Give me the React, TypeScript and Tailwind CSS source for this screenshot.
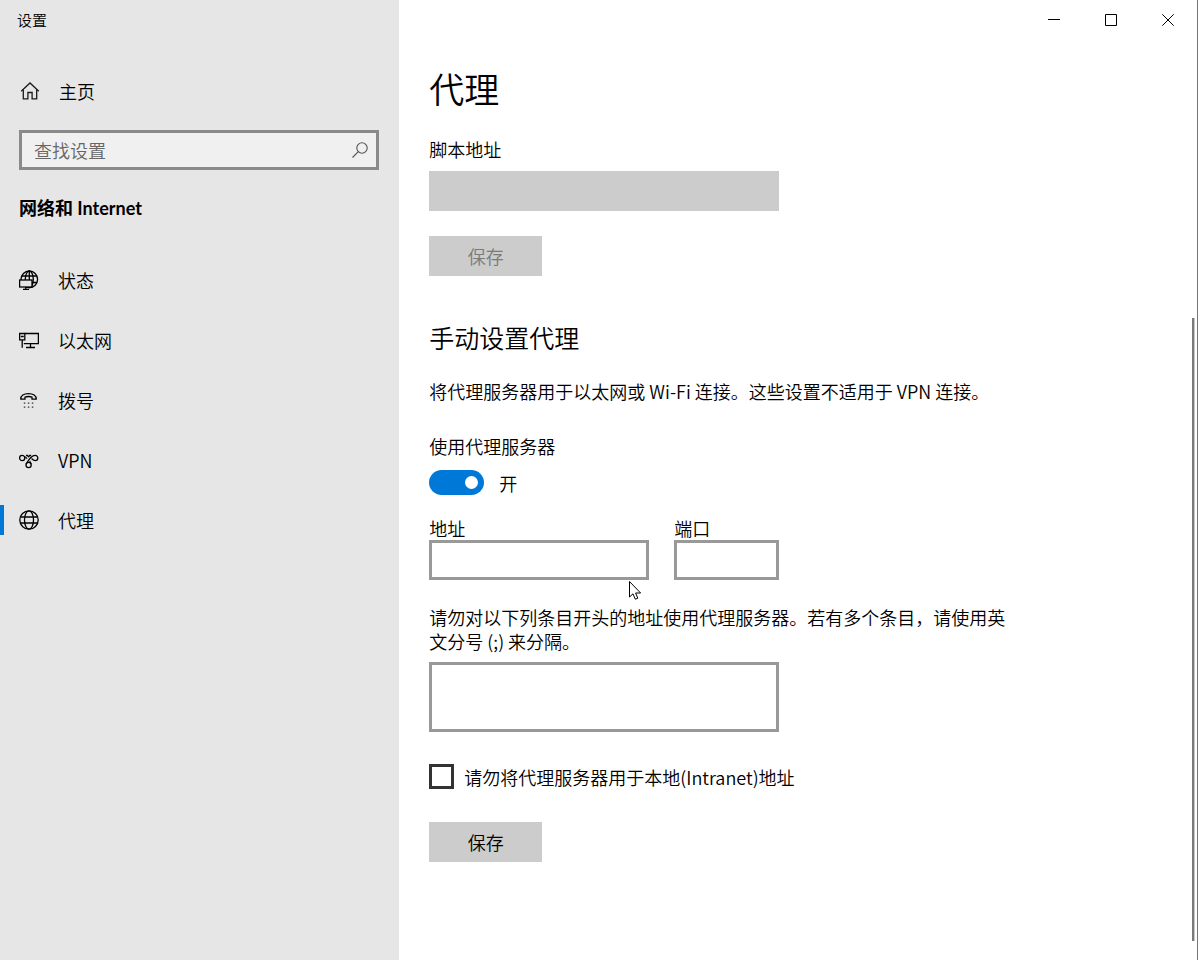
import React, { useState } from 'react';
import { clsx } from 'clsx';

const HomeIcon = () => (
  <svg width="20" height="20" viewBox="0 0 20 20" fill="none" stroke="#1a1a1a" strokeWidth="1.3">
    <path d="M1.2 10.3 10 2l8.8 8.3" />
    <path d="M3.3 8.6v9.3h4.6v-6.4h4.2v6.4h4.6V8.6" />
  </svg>
);

const StatusIcon = () => (
  <svg width="20" height="20" viewBox="0 0 20 20" fill="none" stroke="#000" strokeWidth="1.3">
    <circle cx="10.3" cy="9.3" r="8.3" />
    <ellipse cx="10.3" cy="9.3" rx="4" ry="8.3" />
    <path d="M10.3 1v9M3 6h14.6M13 12.5h4.800" />
    <rect x="0.6" y="10" width="12.4" height="7" fill="#e6e6e6" />
    <path d="M6.800 17v2.300M4 19.300h6" />
  </svg>
);

const EthernetIcon = () => (
  <svg width="20" height="20" viewBox="0 0 20 20" fill="none" stroke="#000" strokeWidth="1.3">
    <path d="M5.800 3.500h13.600v10.200H4.800" />
    <path d="M.6 3.500h5.200v6.300H.6zM1.800 6.500h3M3.200 9.800v8M11.500 13.700v3.800M7 17.500h9" />
  </svg>
);

const DialUpIcon = () => (
  <svg width="20" height="20" viewBox="0 0 20 20" fill="none" stroke="#000" strokeWidth="1.3">
    <path d="M1.800 9.200C1.600 5.600 4.800 3.600 9.500 3.600s7.900 2 7.700 5.600H13V7.200c-2-.8-5-.8-7 0v2z" />
    <path stroke="#333" strokeDasharray="1.500 2.500" d="M4.800 13.200h9.500M4.800 17.200h9.500" />
  </svg>
);

const VpnIcon = () => (
  <svg width="20" height="20" viewBox="0 0 20 20" fill="none" stroke="#000" strokeWidth="1.3">
    <circle cx="3.200" cy="8" r="2.600" />
    <circle cx="9.600" cy="15" r="2.600" />
    <path d="M7.100 14.300C9.600 9.600 13 5.400 16.200 5.400a2.600 2.600 0 1 1 0 5.200c-2 0-2.800-1.300-3.600-2" />
    <path d="M5.300 6.500c1 .4 2 1.200 2.800 2.200M7 5.500h1.500l1.100 1.300 1.100-1.300h1.500M12 14c-.3-1.400-.8-2.200-1.300-3" />
  </svg>
);

const GlobeIcon = () => (
  <svg width="20" height="20" viewBox="0 0 20 20" fill="none" stroke="#000" strokeWidth="1.3">
    <circle cx="10" cy="10" r="9.200" />
    <ellipse cx="10" cy="10" rx="4.500" ry="9.200" />
    <path d="M1.500 7h17M1.500 13h17" />
  </svg>
);

const navItems = [
  { label: '状态', icon: <StatusIcon /> },
  { label: '以太网', icon: <EthernetIcon /> },
  { label: '拨号', icon: <DialUpIcon /> },
  { label: 'VPN', icon: <VpnIcon /> },
  { label: '代理', icon: <GlobeIcon /> },
];

const Sidebar: React.FC = () => {
  const active = '代理';

  return (
    <aside className="w-1/3 shrink-0 bg-[#e6e6e6]">
      <div className="flex h-10 items-center pl-[17px] text-[15px]">设置</div>
      <a href="#home" className="mt-[21px] flex h-[60px] items-center gap-[19px] pl-5">
        <HomeIcon />
        主页
      </a>
      <label className="mt-[9px] mr-5 ml-[19px] flex h-10 items-center border-3 border-[#8a8a8a] bg-[#f0f0f0] pr-2 pl-3">
        <input
          type="text"
          aria-label="查找设置"
          placeholder="查找设置"
          className="min-w-0 flex-1 bg-transparent outline-none placeholder:text-[#666]"
        />
        <svg width="16" height="16" viewBox="0 0 16 16" fill="none" stroke="#555" strokeWidth="1.1">
          <circle cx="10" cy="6" r="5.200" />
          <path d="M6.300 9.700.5 15.500" />
        </svg>
      </label>
      <h2 className="mt-6 pl-[19px] font-['Lato','Noto_Sans_CJK_SC',sans-serif] leading-7 font-bold">网络和 Internet</h2>
      <nav className="mt-7">
        {navItems.map((item) => (
          <a
            key={item.label}
            href={`#${item.label}`}
            aria-current={item.label === active ? 'page' : undefined}
            className="flex h-[60px] items-center"
          >
            <span className={clsx('h-[30px] w-1', item.label === active && 'bg-[#0078d7]')} />
            <span className="mr-[19px] ml-[15px]">{item.icon}</span>
            {item.label}
          </a>
        ))}
      </nav>
    </aside>
  );
};

const WindowControls = () => (
  <div className="flex h-10 justify-end">
    <button aria-label="最小化" className="flex w-[57px] items-center justify-center">
      <svg width="13" height="13" viewBox="0 0 13 13" stroke="#000">
        <path d="M0 5.500h12" />
      </svg>
    </button>
    <button aria-label="最大化" className="flex w-[57px] items-center justify-center">
      <svg width="13" height="13" viewBox="0 0 13 13" fill="none" stroke="#000">
        <path d="M.5 .5h11v11H.5z" />
      </svg>
    </button>
    <button aria-label="关闭" className="flex w-[57px] items-center justify-center">
      <svg width="13" height="13" viewBox="0 0 13 13" stroke="#000">
        <path d="M.3.300l11.400 11.400M11.700.3.300 11.700" />
      </svg>
    </button>
  </div>
);

const Pointer = () => (
  <svg className="absolute top-10 left-[200px]" width="13" height="21" viewBox="0 0 13 21" fill="#fff" stroke="#000">
    <path d="M.5 1.500v15.500l3.500-3.200 2.300 5.400 2.500-1-2.200-5.200h5z" />
  </svg>
);

const fieldClass = 'block h-10 border-3 border-[#999] bg-white px-2 outline-none';

const ProxySettings: React.FC = () => {
  const [enabled, setEnabled] = useState(true);

  return (
    <div className="flex-1 pl-[30px]">
      <h1 className="mt-[23px] text-[35px] leading-[50px]">代理</h1>

      <label htmlFor="script" className="mt-6 block">脚本地址</label>
      <input id="script" type="text" disabled className="mt-[10px] block h-10 w-[350px] bg-[#ccc]" />
      <button disabled className="mt-[25px] block h-10 w-[113px] bg-[#ccc] text-[#7a7a7a]">保存</button>

      <h2 className="mt-[45px] text-[25px] leading-8">手动设置代理</h2>
      <p className="mt-[26px]">将代理服务器用于以太网或 Wi-Fi 连接。这些设置不适用于 VPN 连接。</p>

      <div id="use-proxy" className="mt-[31px]">使用代理服务器</div>
      <div className="mt-3 flex h-[25px] items-center gap-[15px]">
        <button
          role="switch"
          aria-checked={enabled}
          aria-labelledby="use-proxy"
          onClick={() => setEnabled(!enabled)}
          className={clsx(
            'flex h-[25px] w-[55px] items-center rounded-full px-[6px]',
            enabled ? 'justify-end bg-[#0078d7]' : 'justify-start bg-[#999]'
          )}
        >
          <span className="size-[13px] rounded-full bg-white" />
        </button>
        <span>{enabled ? '开' : '关'}</span>
      </div>

      <div className="mt-[21px] flex gap-[25px]">
        <div className="relative">
          <label htmlFor="address" className="block">地址</label>
          <input id="address" type="text" className={clsx(fieldClass, 'w-[220px]')} />
          <div className="absolute top-6 left-0">
            <Pointer />
          </div>
        </div>
        <div>
          <label htmlFor="port" className="block">端口</label>
          <input id="port" type="text" className={clsx(fieldClass, 'w-[105px]')} />
        </div>
      </div>

      <label htmlFor="exceptions" className="mt-[25px] block max-w-[580px]">
        请勿对以下列条目开头的地址使用代理服务器。若有多个条目，请使用英文分号 (;) 来分隔。
      </label>
      <textarea
        id="exceptions"
        className="mt-[9px] block h-[70px] w-[350px] resize-none border-3 border-[#999] bg-white px-2 outline-none"
      />

      <label className="mt-8 flex items-center gap-[10px]">
        <input type="checkbox" className="size-[25px] appearance-none border-3 border-[#333] bg-white checked:bg-[#0078d7]" />
        请勿将代理服务器用于本地(Intranet)地址
      </label>
      <button className="mt-[33px] mb-[98px] block h-10 w-[113px] bg-[#ccc]">保存</button>
    </div>
  );
};

export default function App() {
  return (
    <div className="flex min-h-screen bg-white font-['Noto_Sans_CJK_SC',sans-serif] text-[18px] leading-6 font-[350] text-black">
      <Sidebar />
      <main className="flex flex-1 flex-col border-r border-[#767676]">
        <WindowControls />
        <div className="flex flex-1">
          <ProxySettings />
          <div className="flex flex-col pt-[278px] pr-[2px] pb-[19px]">
            <div className="w-[3px] flex-1 border-r border-[#c8c8c8] bg-[#7a7a7a]" />
          </div>
        </div>
      </main>
    </div>
  );
}
